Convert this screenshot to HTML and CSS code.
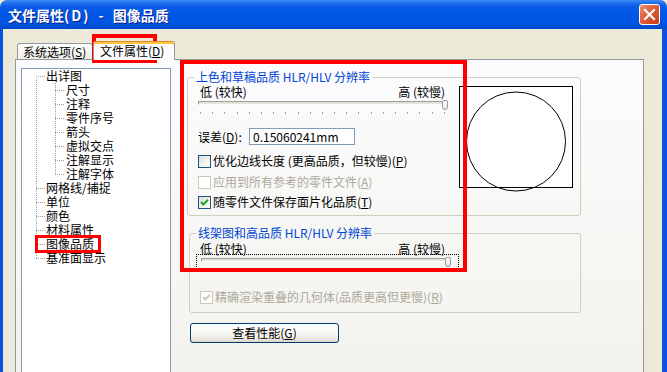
FILE: index.html
```html
<!DOCTYPE html>
<html lang="zh-CN">
<head>
<meta charset="utf-8">
<title>文件属性(D) - 图像品质</title>
<link rel="stylesheet" href="styles.css">
</head>
<body>
<div class="window">
  <div class="titlebar">
    <span class="title">文件属性<span class="ltr">(D)</span><span class="sep">-</span>图像品质</span>
    <span class="close">
      <svg width="19" height="19" viewBox="0 0 19 19"><path d="M5 5 L14 14 M14 5 L5 14" stroke="#fff" stroke-width="2.2" stroke-linecap="square"/></svg>
    </span>
  </div>
  <div class="frame">
    <div class="tabs">
      <div class="tab">系统选项(<u>S</u>)</div>
      <div class="tab active">文件属性(<u>D</u>)</div>
    </div>
    <div class="panel">
      <ul class="tree">
        <li>出详图
          <ul>
            <li>尺寸</li>
            <li>注释</li>
            <li>零件序号</li>
            <li>箭头</li>
            <li>虚拟交点</li>
            <li>注解显示</li>
            <li>注解字体</li>
          </ul>
        </li>
        <li>网格线/捕捉</li>
        <li>单位</li>
        <li>颜色</li>
        <li>材料属性</li>
        <li>图像品质</li>
        <li>基准面显示</li>
      </ul>
      <div class="settings">
        <fieldset class="group g1">
          <legend>上色和草稿品质 HLR/HLV 分辨率</legend>
          <div class="g1-body">
            <div class="g1-left">
              <div class="scale"><span>低 (较快)</span><span>高 (较慢)</span></div>
              <div class="track"><span class="thumb"></span></div>
              <div class="ticks">
                <i></i><i></i><i></i><i></i><i></i><i></i><i></i><i></i><i></i><i></i><i></i><i></i><i></i><i></i><i></i><i></i><i></i><i></i><i></i><i></i><i></i>
              </div>
              <div class="err-row">
                <span class="err-label">误差(<u>D</u>):</span>
                <span class="textbox">0.15060241mm</span>
              </div>
              <div class="cb-row cb1"><span class="cb"></span><span>优化边线长度 (更高品质，但较慢)(<u>P</u>)</span></div>
              <div class="cb-row cb2 disabled"><span class="cb"></span><span>应用到所有参考的零件文件(<u>A</u>)</span></div>
              <div class="cb-row cb3"><span class="cb checked"><svg width="11" height="11" viewBox="0 0 11 11"><path d="M2 5 L4.3 7.5 L9 2.8" fill="none" stroke="#21A121" stroke-width="2"/></svg></span><span>随零件文件保存面片化品质(<u>T</u>)</span></div>
            </div>
            <svg class="preview" width="114" height="106" viewBox="0 0 114 106">
              <rect x="0.5" y="0.5" width="113" height="101" fill="#fff" stroke="#000" stroke-width="1"/>
              <circle cx="57" cy="55.5" r="49.5" fill="none" stroke="#000" stroke-width="1"/>
            </svg>
          </div>
        </fieldset>
        <fieldset class="group g2">
          <legend>线架图和高品质 HLR/HLV 分辨率</legend>
          <div class="scale"><span>低 (较快)</span><span>高 (较慢)</span></div>
          <div class="focus">
            <div class="track"><span class="thumb"></span></div>
          </div>
          <div class="cb-row cb4 disabled"><span class="cb checked"><svg width="11" height="11" viewBox="0 0 11 11"><path d="M2 5 L4.3 7.5 L9 2.8" fill="none" stroke="#CAC8BB" stroke-width="2"/></svg></span><span>精确渲染重叠的几何体(品质更高但更慢)(<u>R</u>)</span></div>
        </fieldset>
        <button class="btn" type="button">查看性能(<u>G</u>)</button>
      </div>
    </div>
  </div>
  <div class="mark mark-tab"></div>
  <div class="mark mark-tree"></div>
  <div class="mark mark-group"></div>
</div>
</body>
</html>
```
FILE: styles.css
```css
* { box-sizing: border-box; }
html, body { margin: 0; padding: 0; }
body {
  font-family: "Noto Sans CJK SC", "Noto Sans", sans-serif;
  font-size: 12px;
  line-height: 14px;
  color: #000;
  background: #ECE9D8;
}
u { text-decoration: underline; text-underline-offset: 1px; }

.window {
  position: relative;
  width: 667px;
  height: 372px;
  overflow: hidden;
  background: #ECE9D8;
}

.titlebar {
  height: 29px;
  display: flex;
  align-items: center;
  justify-content: space-between;
  padding: 0 7px 0 8px;
  border-radius: 7px 7px 0 0;
  background: linear-gradient(to bottom, #3D8DF5 0%, #1F70EC 10%, #0A5CE6 22%, #0057E5 50%, #0054E0 80%, #0049CC 100%);
}
.title {
  color: #fff;
  font-weight: bold;
  font-size: 14px;
  line-height: 16px;
  text-shadow: 1px 1px 0 #0A1E8C;
  padding-top: 1px;
  white-space: nowrap;
}
.title .ltr { letter-spacing: 2px; }
.title .sep { margin: 0 9px 0 8px; }
.close {
  width: 21px;
  height: 21px;
  display: flex;
  align-items: center;
  justify-content: center;
  border: 1px solid #fff;
  border-radius: 3px;
  background: linear-gradient(135deg, #EE9478 0%, #E2613E 40%, #C93A12 100%);
}

.frame {
  height: 343px;
  display: flex;
  flex-direction: column;
  border-left: 3px solid #0B52DF;
  border-right: 5px solid #0B52DF;
  padding: 0 18px 0 12px;
}

.tabs {
  flex: none;
  height: 31px;
  display: flex;
  align-items: flex-end;
  padding-left: 2px;
}
.tab {
  width: 76px;
  height: 16px;
  margin-bottom: 1px;
  padding: 1px 0 0 5px;
  border: 1px solid #919B9C;
  border-bottom: none;
  border-radius: 3px 3px 0 0;
  background: linear-gradient(to bottom, #FFFFFF, #ECEBE6);
  white-space: nowrap;
}
.tab.active {
  position: relative;
  z-index: 1;
  width: 82px;
  height: 19px;
  margin-bottom: 0;
  padding: 2px 0 0 6px;
  border-top: 1px solid #E68B2C;
  box-shadow: inset 0 2px 0 #FFC73C;
  background: #FCFCFE;
}

.panel {
  flex: none;
  height: 330px;
  margin-top: -1px;
  display: flex;
  align-items: flex-start;
  padding: 8px 0 0 5px;
  border: 1px solid #919B9C;
  background: linear-gradient(to bottom, #FCFCFE 0%, #F6F6F3 60%, #F3F2ED 100%);
}

/* tree */
.tree {
  flex: none;
  width: 150px;
  height: 320px;
  margin: 0;
  padding: 0 0 0 14px;
  list-style: none;
  border: 1px solid #7F9DB9;
  background: #fff;
}
.tree ul {
  margin: 0 0 0 9px;
  padding: 0;
  list-style: none;
}
.tree li {
  padding-left: 10px;
  white-space: nowrap;
  background:
    repeating-linear-gradient(to right, #A0A0A0 0 1px, transparent 1px 2px) 0 7px / 9px 1px no-repeat,
    repeating-linear-gradient(to bottom, #A0A0A0 0 1px, transparent 1px 2px) 0 0 / 1px 100% no-repeat;
}
.tree ul li { padding-left: 11px; }
.tree > li:first-child {
  background:
    repeating-linear-gradient(to right, #A0A0A0 0 1px, transparent 1px 2px) 0 7px / 9px 1px no-repeat,
    repeating-linear-gradient(to bottom, #A0A0A0 0 1px, transparent 1px 2px) 0 7px / 1px 100% no-repeat;
}
.tree li:last-child {
  background:
    repeating-linear-gradient(to right, #A0A0A0 0 1px, transparent 1px 2px) 0 7px / 9px 1px no-repeat,
    repeating-linear-gradient(to bottom, #A0A0A0 0 1px, transparent 1px 2px) 0 0 / 1px 8px no-repeat;
}

/* settings */
.settings {
  margin: 2px 0 0 16px;
  display: flex;
  flex-direction: column;
  align-items: flex-start;
}
.group {
  margin: 0;
  min-width: 0;
  border: 1px solid #D0D0BF;
  border-radius: 3px;
}
.group legend {
  color: #0046D5;
  padding: 0 2px;
  margin-left: -4px;
  line-height: 14px;
}
.g1 {
  width: 394px;
  padding: 1px 7px 6px 10px;
}
.g1-body {
  display: flex;
  gap: 9px;
}
.g1-left { width: 252px; flex: none; }
.preview { display: block; margin-top: 1px; overflow: visible; flex: none; }

.scale {
  display: flex;
  justify-content: space-between;
  white-space: nowrap;
}
.g1 .scale { padding: 0 5px 0 2px; }
.g2 .scale { width: 245px; }

.track {
  height: 4px;
  display: flex;
  justify-content: flex-end;
  align-items: flex-start;
  border: 1px solid;
  border-color: #9D9C99 #FFFFFF #FFFFFF #9D9C99;
  background: #E4E3DC;
}
.g1 .track { margin-top: 2px; width: 249px; }
.thumb {
  flex: none;
  width: 6px;
  height: 10px;
  margin-top: -2px;
  margin-right: -2px;
  border: 1px solid #8E9CA3;
  border-radius: 2px 2px 3px 3px;
  background: linear-gradient(to bottom, #FFFFFF, #E8E8E2);
}

.ticks {
  height: 2px;
  margin-top: 7px;
  padding: 0 5px 0 2px;
  display: flex;
  justify-content: space-between;
}
.ticks i {
  display: block;
  width: 1px;
  height: 2px;
  background: #A0A0A0;
}

.err-row {
  margin-top: 14px;
  display: flex;
  align-items: center;
  white-space: nowrap;
}
.err-label { width: 51px; }
.textbox {
  width: 106px;
  height: 17px;
  padding: 1px 0 0 3px;
  border: 1px solid #7F9DB9;
  background: #fff;
  line-height: 14px;
}

.cb-row {
  height: 14px;
  display: flex;
  align-items: center;
  gap: 2px;
  white-space: nowrap;
}
.cb1 { margin-top: 9px; }
.cb2 { margin-top: 7px; }
.cb3 { margin-top: 6px; }
.cb {
  flex: none;
  width: 13px;
  height: 13px;
  display: flex;
  align-items: center;
  justify-content: center;
  border: 1px solid #1C5180;
  background: linear-gradient(135deg, #DCDCD7 0%, #F4F4F2 60%, #FFFFFF 100%);
}
.cb svg { display: block; }
.disabled { color: #ACA899; }
.disabled .cb {
  border-color: #CAC8BB;
  background: #fff;
}

.g2 {
  width: 392px;
  margin-top: 10px;
  margin-left: 2px;
  padding: 2px 7px 8px 10px;
}
.focus {
  width: 263px;
  height: 15px;
  margin: -2px 0 0 -4px;
  padding: 3px 0 0 4px;
  border: 1px dotted #000;
}
.focus .track { width: 250px; }
.focus .thumb { margin-right: -1px; }
.cb4 { margin-top: 21px; }

.btn {
  width: 149px;
  height: 20px;
  margin: 10px 0 0 3px;
  padding: 0;
  font: inherit;
  line-height: 14px;
  color: #000;
  border: 1px solid #003C74;
  border-radius: 3px;
  background: linear-gradient(to bottom, #FFFFFF 0%, #F3F3EF 60%, #E6E4DB 90%, #D6D0C5 100%);
}

/* red annotation boxes drawn over the screenshot */
.mark {
  position: absolute;
  border: 4px solid #FF0000;
  pointer-events: none;
}
.mark-tab { left: 92px; top: 34px; width: 65px; height: 29px; }
.mark-tree { left: 35px; top: 235px; width: 66px; height: 18px; border-width: 3px; }
.mark-group { left: 180px; top: 60px; width: 287px; height: 212px; }
```
